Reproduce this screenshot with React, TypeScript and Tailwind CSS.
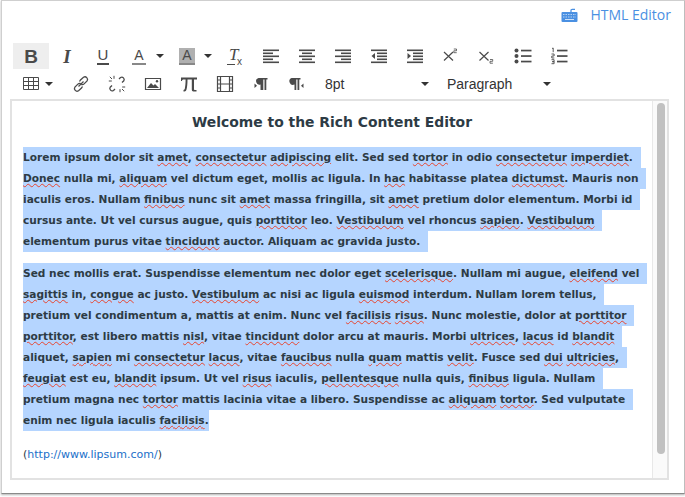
const first = [
  'Lorem ipsum dolor sit *amet*, *consectetur* *adipiscing* elit. Sed sed *tortor* in odio *consectetur* *imperdiet*. ',
  '*Donec* nulla mi, *aliquam* vel dictum eget, mollis ac ligula. In *hac* habitasse platea *dictumst*. Mauris non ',
  'iaculis eros. Nullam *finibus* nunc sit *amet* massa fringilla, sit *amet* pretium dolor elementum. Morbi id ',
  'cursus ante. Ut vel cursus augue, quis *porttitor* leo. *Vestibulum* vel rhoncus *sapien*. *Vestibulum* ',
  'elementum purus vitae *tincidunt* auctor. Aliquam ac gravida justo. '
];

const second = [
  'Sed nec mollis erat. Suspendisse elementum nec dolor eget *scelerisque*. Nullam mi augue, *eleifend* vel ',
  '*sagittis* in, *congue* ac justo. *Vestibulum* ac nisi ac ligula *euismod* interdum. Nullam lorem tellus, ',
  'pretium vel condimentum a, mattis at enim. Nunc vel *facilisis* *risus*. Nunc molestie, dolor at *porttitor* ',
  '*porttitor*, est libero mattis *nisl*, vitae *tincidunt* dolor arcu at mauris. Morbi *ultrices*, *lacus* id *blandit* ',
  'aliquet, *sapien* mi *consectetur* *lacus*, vitae *faucibus* nulla *quam* mattis *velit*. Fusce sed *dui* *ultricies*, ',
  '*feugiat* est eu, *blandit* ipsum. Ut vel *risus* iaculis, *pellentesque* nulla quis, *finibus* ligula. Nullam ',
  'pretium magna nec *tortor* mattis lacinia vitae a libero. Suspendisse ac *aliquam* *tortor*. Sed vulputate ',
  'enim nec ligula iaculis *facilisis*.'
];

const Line = ({ text }: { text: string }) => (
  <div
    className={`w-fit bg-[#b5d5ff] whitespace-pre h-[21px] leading-[21px] ${
      text.endsWith(' ') ? 'pr-1' : ''
    }`}
  >
    {text.split('*').map((part, i) =>
      i % 2 === 1 ? (
        <span
          key={i}
          className="underline decoration-wavy decoration-[#e8452f] decoration-1 underline-offset-1"
        >
          {part}
        </span>
      ) : (
        <span key={i}>{part}</span>
      )
    )}
  </div>
);

const Icon = ({ children }: { children: React.ReactNode }) => (
  <svg width="18" height="18" viewBox="0 0 18 18" fill="none" className="text-[#4a4a4a]">
    {children}
  </svg>
);

const Caret = ({ className = '' }: { className?: string }) => (
  <div
    className={`w-0 h-0 shrink-0 border-x-[4px] border-x-transparent border-t-[4px] border-t-[#333] ${className}`}
  />
);

const Btn = ({ children, active }: { children: React.ReactNode; active?: boolean }) => (
  <div
    className={`w-9 h-[26px] flex items-center justify-center shrink-0 text-[#4a4a4a] ${
      active ? 'bg-[#eeeeee]' : ''
    }`}
  >
    {children}
  </div>
);

const Bars = ({ rows }: { rows: [number, number][] }) => (
  <Icon>
    {rows.map(([x, w], i) => (
      <rect key={i} x={x} y={2.5 + i * 3} width={w} height="1.6" fill="#4a4a4a" />
    ))}
  </Icon>
);

const Indent = ({ out }: { out?: boolean }) => (
  <Icon>
    <rect x="1" y="2.5" width="16" height="1.6" fill="#4a4a4a" />
    <rect x="7" y="5.5" width="10" height="1.6" fill="#4a4a4a" />
    <rect x="7" y="8.5" width="10" height="1.6" fill="#4a4a4a" />
    <rect x="7" y="11.5" width="10" height="1.6" fill="#4a4a4a" />
    <rect x="1" y="14.5" width="16" height="1.6" fill="#4a4a4a" />
    <path d={out ? 'M5 6v6L1.5 9z' : 'M1.5 6v6L5 9z'} fill="#4a4a4a" />
  </Icon>
);

const Pilcrow = ({ rtl }: { rtl?: boolean }) => (
  <Icon>
    <path
      d={
        rtl
          ? 'M3.500 3h9v1.500h-1.200V15H9.500V4.500H8.300V15H6.500V9.500A3.300 3.300 0 0 1 3.500 3z'
          : 'M6.500 3h9v1.500h-1.200V15h-1.800V4.500h-1.200V15H8.500V9.500A3.300 3.300 0 0 1 6.500 3z'
      }
      fill="#4a4a4a"
    />
    <path d={rtl ? 'M15.500 8.500v4.500l-2.500-2.200z' : 'M2.500 8.500v4.500l2.500-2.200z'} fill="#4a4a4a" />
  </Icon>
);

const Toolbar = () => (
  <div className="ml-[11px] mt-[16px] font-['Liberation_Sans',sans-serif]">
    <div className="flex h-[26px] items-center">
      <Btn active>
        <span className="text-[19px] font-bold leading-none">B</span>
      </Btn>
      <Btn>
        <span className="text-[19px] font-bold italic leading-none font-['Liberation_Serif',serif]">I</span>
      </Btn>
      <Btn>
        <span className="text-[15px] leading-[15px] border-b-2 border-[#4a4a4a] px-[1px] h-[18px]">U</span>
      </Btn>
      <div className="w-12 flex items-center shrink-0">
        <Btn>
          <span className="text-[14px] leading-[15px] border-b-2 border-[#888] px-[2px] h-[17px]">A</span>
        </Btn>
        <Caret className="-ml-[1px]" />
      </div>
      <div className="w-12 flex items-center shrink-0">
        <Btn>
          <span className="text-[14px] leading-[15px] bg-[#b0b0b0] border-b-2 border-[#888] w-4 text-center h-[17px]">A</span>
        </Btn>
        <Caret className="-ml-[1px]" />
      </div>
      <Btn>
        <span className="relative w-[18px] h-[18px]">
          <span className="absolute left-[3px] -top-[1px] text-[17px] italic leading-[18px] font-['Liberation_Serif',serif]">T</span>
          <span className="absolute left-[1px] bottom-0 w-[8px] h-[1.5px] bg-[#4a4a4a]" />
          <span className="absolute left-[11px] bottom-[-2px] text-[10px] leading-[10px]">x</span>
        </span>
      </Btn>
      <Btn><Bars rows={[[1, 16], [1, 10], [1, 16], [1, 10], [1, 16]]} /></Btn>
      <Btn><Bars rows={[[1, 16], [4, 10], [1, 16], [4, 10], [1, 16]]} /></Btn>
      <Btn><Bars rows={[[1, 16], [7, 10], [1, 16], [7, 10], [1, 16]]} /></Btn>
      <Btn><Indent out /></Btn>
      <Btn><Indent /></Btn>
      <Btn>
        <Icon>
          <path d="M2 5l9 8.500M11 5l-9 8.500" stroke="#4a4a4a" strokeWidth="1.200" />
          <path d="M11.800 2h2.700v1.800h-2.700v1.900h2.900" stroke="#4a4a4a" strokeWidth="0.800" />
        </Icon>
      </Btn>
      <Btn>
        <Icon>
          <path d="M1.500 5l9 8.500M10.500 5l-9 8.500" stroke="#4a4a4a" strokeWidth="1.200" />
          <path d="M12 12.500h2.700v1.800H12v1.900h2.900" stroke="#4a4a4a" strokeWidth="0.800" />
        </Icon>
      </Btn>
      <Btn>
        <Icon>
          <circle cx="2.500" cy="3.500" r="2" fill="#4a4a4a" />
          <circle cx="2.500" cy="9" r="2" fill="#4a4a4a" />
          <circle cx="2.500" cy="14.500" r="2" fill="#4a4a4a" />
          <rect x="7" y="2.700" width="10.500" height="1.700" fill="#4a4a4a" />
          <rect x="7" y="8.200" width="10.500" height="1.700" fill="#4a4a4a" />
          <rect x="7" y="13.700" width="10.500" height="1.700" fill="#4a4a4a" />
        </Icon>
      </Btn>
      <Btn>
        <Icon>
          <path d="M2 1.500l1.200-.5v4.200M1.500 7h2.600v2H1.800v2h2.500M1.500 12.700h2.600v2H2.200h1.900v2H1.500" stroke="#4a4a4a" strokeWidth="0.900" />
          <rect x="7" y="2.700" width="10.500" height="1.700" fill="#4a4a4a" />
          <rect x="7" y="8.200" width="10.500" height="1.700" fill="#4a4a4a" />
          <rect x="7" y="13.700" width="10.500" height="1.700" fill="#4a4a4a" />
        </Icon>
      </Btn>
    </div>
    <div className="flex h-[28px] mt-[1px] items-center">
      <div className="w-[50px] flex items-center shrink-0">
        <Btn>
          <Icon>
            <path d="M1.500 2.500h15v12h-15zM1.500 6.500h15M1.500 10.500h15M6.500 2.500v12M11.500 2.500v12" stroke="#4a4a4a" strokeWidth="1" />
          </Icon>
        </Btn>
        <Caret className="-ml-[4px]" />
      </div>
      <Btn>
        <Icon>
          <path d="M7.500 6.500l1-1.600 3-2.600a2.600 2.600 0 0 1 3.600 3.600l-3 3a2.600 2.600 0 0 1-2.900.5M10.500 11.500l-1 1.600-3 2.600a2.600 2.600 0 0 1-3.600-3.600l3-3a2.600 2.600 0 0 1 2.900-.5" stroke="#4a4a4a" strokeWidth="1.300" />
          <path d="M6.500 11.500l5-5" stroke="#4a4a4a" strokeWidth="1.300" />
        </Icon>
      </Btn>
      <Btn>
        <Icon>
          <path d="M11 4l1.500-1.500a2.400 2.400 0 0 1 3.300 3.300L14 7.500M7 14l-1.500 1.500a2.400 2.400 0 0 1-3.300-3.300L4 10.500" stroke="#4a4a4a" strokeWidth="1.300" />
          <path d="M6 .8v3M.8 6h3M1.800 1.800l2.200 2.200M12 14.200v3M14.200 12h3M14 14l2.200 2.200" stroke="#4a4a4a" strokeWidth="1" />
        </Icon>
      </Btn>
      <Btn>
        <Icon>
          <path d="M1.500 3.500h15v11h-15z" stroke="#4a4a4a" strokeWidth="1.200" />
          <path d="M3 13l4-5 2.500 2.500L11 9l4 4z" fill="#4a4a4a" />
          <circle cx="13" cy="6.300" r="1.200" fill="#4a4a4a" />
        </Icon>
      </Btn>
      <Btn>
        <Icon>
          <path d="M1 2.500h16v2h-3v9.500c0 .8.300 1.100 1 1.100h1.500v1.400h-3c-1.200 0-1.700-.8-1.700-2V4.500H7.500c0 4-.3 7.500-1 10-.3 1.200-1 2-2 2H3.500v-1.500c.8-.1 1.100-.4 1.300-1.200.5-2.400.8-5.600.8-9.300H3.500c-.9 0-1.300.5-1.600 1.500H1z" fill="#4a4a4a" />
        </Icon>
      </Btn>
      <Btn>
        <Icon>
          <path d="M1.500 1.500h15v15h-15zM4.500 1.500v15M13.500 1.500v15M4.500 9h9M1.500 5h3M1.500 9h3M1.500 13h3M13.500 5h3M13.500 9h3M13.500 13h3" stroke="#4a4a4a" strokeWidth="1.200" />
        </Icon>
      </Btn>
      <Btn><Pilcrow /></Btn>
      <Btn><Pilcrow rtl /></Btn>
      <div className="w-[120px] pl-[10px] pr-[6px] flex items-center justify-between text-[14px] text-[#333] shrink-0">
        <span>8pt</span>
        <Caret />
      </div>
      <div className="w-[120px] pl-[12px] pr-[4px] flex items-center justify-between text-[14px] text-[#333] shrink-0">
        <span>Paragraph</span>
        <Caret />
      </div>
    </div>
  </div>
);

export default function App() {
  return (
    <div className="h-[497px] w-[685px] bg-white overflow-hidden">
      <div className="h-[494px] w-[684px] ml-[1px] border border-[#cfcfcf] border-b-[#8a8a8a] border-r-[#bdbdbd] shadow-[0_1px_2px_rgba(0,0,0,0.3)] bg-white">
        <div className="h-6 mt-[2px] pr-[13px] flex items-center justify-end gap-[12px] text-[#4a90e2]">
          <svg width="17" height="14" viewBox="0 0 17 14" fill="none">
            <path d="M10 4V2.500c0-.8.400-1.200 1.200-1.200h2.800" stroke="#4a90e2" strokeWidth="1.300" />
            <rect x="0.500" y="4" width="16" height="10" rx="1" fill="#4a90e2" />
            <path d="M2 6.500h13M2 9h13" stroke="#cfe2f8" strokeWidth="0.800" strokeDasharray="1.500 1" />
            <path d="M4 11.500h9" stroke="#cfe2f8" strokeWidth="1" />
          </svg>
          <span className="font-['Open_Sans',sans-serif] text-[14px] leading-6">HTML Editor</span>
        </div>
        <Toolbar />
        <div className="ml-[8px] mt-[1px] w-[659px] h-[381px] border-2 border-[#e2e2e2] flex font-['DejaVu_Sans',sans-serif] text-[#2d3b45]">
          <div className="flex-1 min-w-0 pl-[11px] pr-[11px] overflow-hidden">
            <h1 className="mt-[6px] text-center font-bold text-[13.9px] leading-[30px]">
              Welcome to the Rich Content Editor
            </h1>
            <div className="mt-[10px] text-[10.6px] font-bold">
              {first.map(l => (
                <Line key={l} text={l} />
              ))}
            </div>
            <div className="mt-[11px] text-[10.6px] font-bold">
              {second.map(l => (
                <Line key={l} text={l} />
              ))}
            </div>
            <p className="mt-[13px] text-[11px] leading-[21px]">
              (<span className="text-[#1a6fc9]">http://www.lipsum.com/</span>)
            </p>
          </div>
          <div className="w-[15px] bg-[#fafafa] border-l border-[#e8e8e8] pt-[2px] pl-[4px]">
            <div className="w-2 h-[351px] rounded-full bg-[#c1c1c1]" />
          </div>
        </div>
      </div>
    </div>
  );
}
